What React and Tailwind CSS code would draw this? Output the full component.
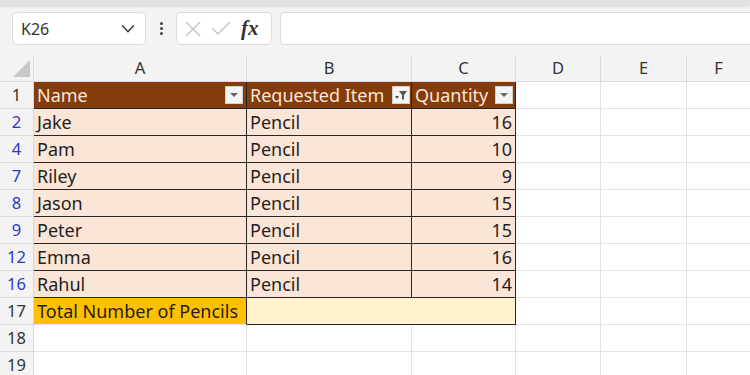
import React from 'react';

const cols = ['A', 'B', 'C', 'D', 'E', 'F'];

const rows = [
  { n: 2, name: 'Jake', qty: 16 },
  { n: 4, name: 'Pam', qty: 10 },
  { n: 7, name: 'Riley', qty: 9 },
  { n: 8, name: 'Jason', qty: 15 },
  { n: 9, name: 'Peter', qty: 15 },
  { n: 12, name: 'Emma', qty: 16 },
  { n: 16, name: 'Rahul', qty: 14 },
];

const gridCols = 'grid grid-cols-[34px_213px_165px_104px_85px_86px_64px]';

function FilterButton({ filtered }) {
  return (
    <span className="w-[18px] h-[18px] bg-[#f4f4f4] border border-[#d0d0d0] flex items-center justify-center shrink-0">
      {filtered ? (
        <svg width="14" height="12" viewBox="0 0 14 12">
          <path d="M5 2h8l-3 4v5l-2-1V6z" fill="#555" />
          <path d="M1 7h4l-2 3z" fill="#555" />
        </svg>
      ) : (
        <svg width="10" height="6" viewBox="0 0 10 6">
          <path d="M1 1h8l-4 4z" fill="#666" />
        </svg>
      )}
    </span>
  );
}

function RowHead({ children, blue }) {
  return (
    <div className={`h-[27px] bg-[#f3f3f3] border-r border-b border-[#dadada] flex items-center justify-center text-[16.5px] ${blue ? 'text-[#2f38c4]' : 'text-[#333]'}`}>
      {children}
    </div>
  );
}

function Empty() {
  return <div className="h-[27px] border-r border-b border-[#e2e2e2]" />;
}

const App = () => {
  return (
    <div className="w-[750px] h-[375px] overflow-hidden bg-white font-['Noto_Sans','Open_Sans',sans-serif] text-[#1f1f1f]">
      <div className="h-[55px] bg-[#f3f3f3] relative">
        <div className="h-[5px] bg-[#e2e2e2] shadow-[0_1px_3px_rgba(0,0,0,0.15)]" />
        <div className="flex items-center pt-[7px] h-[33px] box-content">
          <div className="ml-[12px] w-[134px] h-[33px] bg-white border border-[#dcdcdc] rounded-[5px] flex items-center justify-between pl-[8px] pr-[10px]">
            <span className="text-[16px] text-[#333]">K26</span>
            <svg width="14" height="9" viewBox="0 0 14 9">
              <path d="M1 1.5l6 6 6-6" stroke="#444" strokeWidth="1.6" fill="none" />
            </svg>
          </div>
          <div className="w-[30px] flex flex-col items-center gap-[2px]">
            <span className="w-[3px] h-[3px] rounded-full bg-[#444]" />
            <span className="w-[3px] h-[3px] rounded-full bg-[#444]" />
            <span className="w-[3px] h-[3px] rounded-full bg-[#444]" />
          </div>
          <div className="w-[96px] h-[33px] bg-white border border-[#dcdcdc] rounded-[5px] flex items-center pl-[8px] gap-[10px]">
            <svg width="16" height="16" viewBox="0 0 16 16">
              <path d="M1 1l14 14M15 1L1 15" stroke="#c4c4c4" strokeWidth="1.4" />
            </svg>
            <svg width="20" height="15" viewBox="0 0 20 15">
              <path d="M1 7l6 6L19 1" stroke="#c4c4c4" strokeWidth="1.4" fill="none" />
            </svg>
            <span className="font-['Liberation_Serif',serif] italic text-[21px] text-[#333] font-semibold leading-none">fx</span>
          </div>
          <div className="ml-[8px] flex-1 h-[33px] bg-white border border-[#dcdcdc] rounded-l-[5px] border-r-0" />
        </div>
      </div>

      <div className={gridCols}>
        <div className="h-[27px] bg-[#f3f3f3] border-r border-b border-[#dadada] flex items-end justify-end pr-[3px] pb-[4px]">
          <svg width="17" height="17" viewBox="0 0 16 16">
            <path d="M16 0v16H0z" fill="#c8c8c8" />
          </svg>
        </div>
        {cols.map((c) => (
          <div key={c} className="h-[27px] bg-[#f3f3f3] border-r border-b border-[#dadada] flex items-center justify-center text-[16.5px] text-[#333]">
            {c}
          </div>
        ))}

        <RowHead>1</RowHead>
        <div className="h-[27px] bg-[#843c0c] border-r border-b border-[#262626] flex items-center justify-between pl-[3px] pr-[3px] text-[18px] text-[#fbe5d6]">
          <span>Name</span>
          <FilterButton />
        </div>
        <div className="h-[27px] bg-[#843c0c] border-r border-b border-[#262626] flex items-center justify-between pl-[3px] pr-[1px] text-[18px] text-[#fbe5d6]">
          <span className="whitespace-nowrap">Requested Item</span>
          <FilterButton filtered />
        </div>
        <div className="h-[27px] bg-[#843c0c] border-r border-b border-[#262626] flex items-center justify-between pl-[3px] pr-[2px] text-[18px] text-[#fbe5d6]">
          <span>Quantity</span>
          <FilterButton />
        </div>
        <Empty />
        <Empty />
        <Empty />

        {rows.map((r) => (
          <React.Fragment key={r.n}>
            <RowHead blue>{r.n}</RowHead>
            <div className="h-[27px] bg-[#fbe5d6] border-r border-b border-[#262626] flex items-center pl-[3px] text-[18px]">{r.name}</div>
            <div className="h-[27px] bg-[#fbe5d6] border-r border-b border-[#262626] flex items-center pl-[3px] text-[18px]">Pencil</div>
            <div className="h-[27px] bg-[#fbe5d6] border-r border-b border-[#262626] flex items-center justify-end pr-[3px] text-[18px]">{r.qty}</div>
            <Empty />
            <Empty />
            <Empty />
          </React.Fragment>
        ))}

        <RowHead>17</RowHead>
        <div className="h-[27px] bg-[#ffc000] border-r border-b border-r-[#262626] border-b-[#e2e2e2] flex items-center pl-[3px] text-[18px] whitespace-nowrap">Total Number of Pencils</div>
        <div className="col-span-2 h-[27px] bg-[#fff2cc] border-r border-b border-[#262626]" />
        <Empty />
        <Empty />
        <Empty />

        {[18, 19].map((n) => (
          <React.Fragment key={n}>
            <RowHead>{n}</RowHead>
            <Empty />
            <Empty />
            <Empty />
            <Empty />
            <Empty />
            <Empty />
          </React.Fragment>
        ))}
      </div>
    </div>
  );
};

export default App;
